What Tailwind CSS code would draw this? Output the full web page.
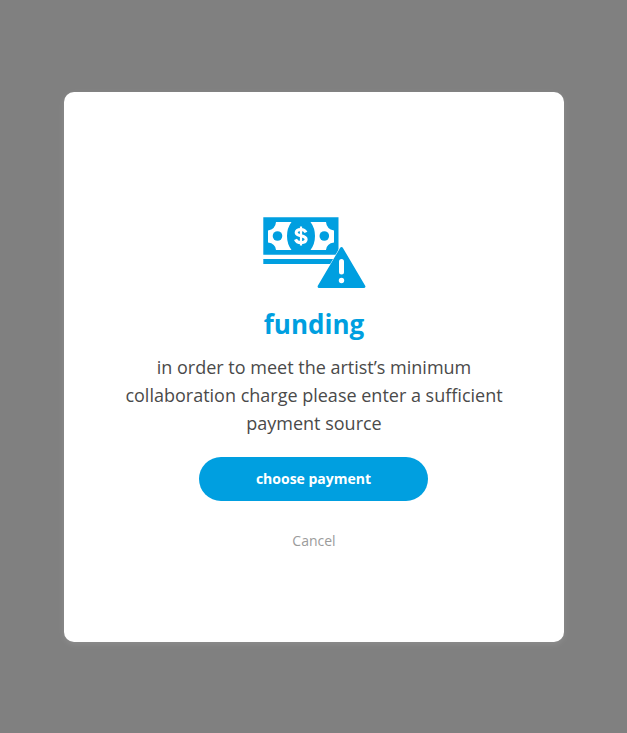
<!DOCTYPE html>
<html lang="en">
<head>
<meta charset="utf-8">
<title>Funding</title>
<script src="https://cdn.jsdelivr.net/npm/@tailwindcss/browser@4"></script>
</head>
<body class="h-screen overflow-hidden bg-[#808080] pt-[92px] pl-16 font-['Open_Sans',sans-serif]">
<main class="flex h-[550px] w-[500px] flex-col items-center rounded-[10px] bg-white pt-[125px] shadow-[0_2px_6px_rgba(255,255,255,0.1)]">
  <svg class="h-[72px] w-[103px] shrink-0" viewBox="263 217 103 72" fill="#009fe0" aria-hidden="true">
    <path d="M263.3 217.3H338.5V254.7H263.3Z"/>
    <path d="M263.3 259H338.5V264H263.3Z"/>
    <path fill="#fff" d="M276 222H291.500Q287 228 287 236T291.500 250H276Q275.500 243.500 268 242.500V230.500Q275.500 229 276 222ZM326 222H310.500Q315 228 315 236T310.500 250H326Q326.500 243.500 334 242.500V230.500Q326.500 229 326 222Z"/>
    <circle cx="277.500" cy="236" r="4.800"/>
    <circle cx="324.300" cy="236" r="4.800"/>
    <path fill="none" stroke="#fff" stroke-width="3.100" d="M306 232.400C305 230.300 303.300 229.500 301 229.500C298.200 229.500 296.200 230.700 296.200 232.700C296.200 237 306.100 234.500 306.100 239.300C306.100 241.600 303.900 242.600 301 242.600C298.200 242.600 296.300 241.600 295.500 239.400"/>
    <path fill="none" stroke="#fff" stroke-width="2.200" d="M301 226.500V245.500"/>
    <path stroke="#fff" stroke-width="4" stroke-linejoin="round" d="M341.500 248.500L364 287H319Z"/>
    <path stroke="#009fe0" stroke-width="3" stroke-linejoin="round" d="M341.500 248.500L363.900 286.500H319.100Z"/>
    <path fill="none" stroke="#fff" stroke-width="5" stroke-linecap="round" d="M341.500 261.500V272"/>
    <circle cx="341.500" cy="280.500" r="2.700" fill="#fff"/>
  </svg>
  <h1 class="mt-4 text-[26px] leading-[38px] font-bold text-[#009fe0]">funding</h1>
  <p class="mt-[10px] w-[400px] text-center text-[18px] leading-7 text-[#4a4a4a]">in order to meet the artist’s minimum<br>collaboration charge please enter a sufficient<br>payment source</p>
  <button class="mt-5 mr-[2px] h-11 w-[229px] rounded-full bg-[#009fe0] pb-[2px] pl-px text-[14px] font-bold text-white">choose payment</button>
  <button class="mt-[30px] h-5 text-[14px] leading-5 text-[#9b9b9b]">Cancel</button>
</main>
</body>
</html>
